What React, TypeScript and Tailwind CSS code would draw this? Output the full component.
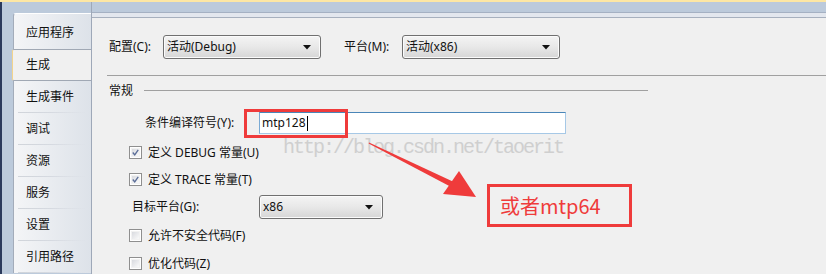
import React from "react";

const tabs = ["生成事件", "调试", "资源", "服务", "设置", "引用路径"];

const Dropdown: React.FC<{ value: string; width: string }> = ({ value, width }) => (
  <div
    className={`${width} h-[24px] rounded-[3px] border border-[#707070] bg-linear-to-b from-[#f4f4f4] via-[#e8e8e8] to-[#d6d6d6] flex items-center justify-between pl-[3px] pr-[9px] shadow-[inset_0_0_0_1px_#fbfbfb]`}
  >
    <span className="text-[12px] leading-none text-[#111]">{value}</span>
    <svg width="8" height="5" viewBox="0 0 8 5">
      <polygon points="0,0 8,0 4,4.5" fill="#111" />
    </svg>
  </div>
);

const Checkbox: React.FC<{ checked?: boolean; label: string }> = ({ checked, label }) => (
  <div className="flex items-center h-[13px] ml-[37px] gap-[6px]">
    <div className="w-[13px] h-[13px] border border-[#8f8f8f] bg-white p-px">
      <div className="w-full h-full bg-linear-to-br from-[#d8dadf] to-[#fafafa] border border-[#f2f2f2] flex items-center justify-center">
        {checked && (
          <svg width="9" height="9" viewBox="0 0 9 9">
            <path d="M1 4.5 L3.5 7.5 L8 1" stroke="#5a6d98" strokeWidth="1.7" fill="none" />
          </svg>
        )}
      </div>
    </div>
    <span className="text-[12px] leading-none text-[#111]">{label}</span>
  </div>
);

export default function App() {
  return (
    <div className="relative w-[826px] h-[274px] overflow-hidden bg-[#bccadb] flex flex-col font-['Noto_Sans','Noto_Sans_CJK_SC',sans-serif]">
      <div className="h-[2px] bg-[#fde7a4]" />
      <div className="flex flex-1 min-h-0">
        <div className="w-[2px] bg-[#2b3a5c]" />
        <div className="w-[10px]" />
        {/* tab column */}
        <div className="w-[80px] flex flex-col pt-[11px] border-r border-[#9ea8b8]">
          <div className="ml-px h-[36px] rounded-tl-[3px] border-l border-t border-[#a3acba] border-t-white bg-linear-to-r from-[#f4f5f7] to-[#dde2e9] pl-[12px] pt-[13px] text-[12px] leading-none text-[#111]">
            应用程序
          </div>
          <div className="h-[32px] border-y border-[#a0a8b4] border-l border-l-[#f3d48c] rounded-l-[2px] bg-[#f0f0f0] pl-[13px] flex items-center text-[12px] leading-none text-[#111]">
            生成
          </div>
          {tabs.map((t) => (
            <div
              key={t}
              className="ml-px h-[32px] border-l border-[#a3acba] bg-linear-to-r from-[#f4f5f7] to-[#dde2e9] flex flex-col"
            >
              <div className="flex-1 pl-[12px] flex items-center text-[12px] leading-none text-[#111]">{t}</div>
              <div className="h-px mx-[4px] bg-linear-to-r from-[#d0d4da] via-[#d6dae1] to-transparent" />
            </div>
          ))}
        </div>
        {/* content */}
        <div className="flex-1 flex flex-col">
          <div className="h-[10px]" />
          <div className="h-px bg-[#a5b1c3]" />
          <div className="h-[4px] bg-[#e3e7ee]" />
          <div className="h-px bg-[#a7b0be]" />
          <div className="flex-1 bg-[#f0f0f0] flex flex-col text-[#111]">
            <div className="mt-[17px] ml-[17px] h-[24px] flex items-center">
              <span className="w-[54px] text-[12px] leading-none">配置(C):</span>
              <Dropdown value="活动(Debug)" width="w-[158px]" />
              <span className="ml-[23px] w-[58px] text-[12px] leading-none">平台(M):</span>
              <Dropdown value="活动(x86)" width="w-[158px]" />
            </div>
            <div className="mt-[16px] ml-[15px] h-px bg-[#a0a0a0]" />
            <div className="mt-[8px] ml-[17px] h-[14px] flex items-center">
              <span className="text-[12px] leading-none">常规</span>
              <div className="ml-[11px] w-[504px] h-px bg-[#a0a0a0] -mt-[2px]" />
            </div>
            <div className="mt-[14px] ml-[53px] h-[22px] flex items-center">
              <span className="w-[114px] text-[12px] leading-none">条件编译符号(Y):</span>
              <div className="w-[307px] h-[22px] bg-white border border-[#a6c8e6] border-t-[#4a86b8] border-l-[#7aaad4] flex items-center pl-[2px]">
                <span className="text-[12px] leading-none text-[#111]">mtp128</span>
                <div className="w-px h-[15px] bg-black ml-px" />
              </div>
            </div>
            <div className="mt-[12px]">
              <Checkbox checked label="定义 DEBUG 常量(U)" />
            </div>
            <div className="mt-[14px]">
              <Checkbox checked label="定义 TRACE 常量(T)" />
            </div>
            <div className="mt-[9px] ml-[40px] h-[24px] flex items-center">
              <span className="w-[127px] text-[12px] leading-none">目标平台(G):</span>
              <Dropdown value="x86" width="w-[124px]" />
            </div>
            <div className="mt-[10px]">
              <Checkbox label="允许不安全代码(F)" />
            </div>
            <div className="mt-[15px]">
              <Checkbox label="优化代码(Z)" />
            </div>
          </div>
        </div>
      </div>

      {/* watermark */}
      <div className="absolute left-[283px] top-[137px] font-['Liberation_Mono',monospace] text-[20px] leading-[22px] tracking-[-2px] text-[#cfcfcf] pointer-events-none">
        http://blog.csdn.net/taoerit
      </div>

      {/* annotations */}
      <div className="absolute left-[244px] top-[109px] w-[104px] h-[29px] border-[3px] border-[#ef3b3b]" />
      <div className="absolute left-[487px] top-[184px] w-[145px] h-[43px] border-[3px] border-[#ef3b3b] flex items-center pl-[10px]">
        <span className="text-[20px] leading-none text-[#ef3b3b] font-['Noto_Sans_CJK_SC',sans-serif]">或者mtp64</span>
      </div>
      <svg className="absolute left-0 top-0" width="826" height="274" viewBox="0 0 826 274">
        <polygon points="369,142.6 368.6,143.5 450.2,186.4 452.8,181.6" fill="#ef3b3b" />
        <polygon points="443,194 459,171 476,197" fill="#ef3b3b" />
      </svg>
    </div>
  );
}
